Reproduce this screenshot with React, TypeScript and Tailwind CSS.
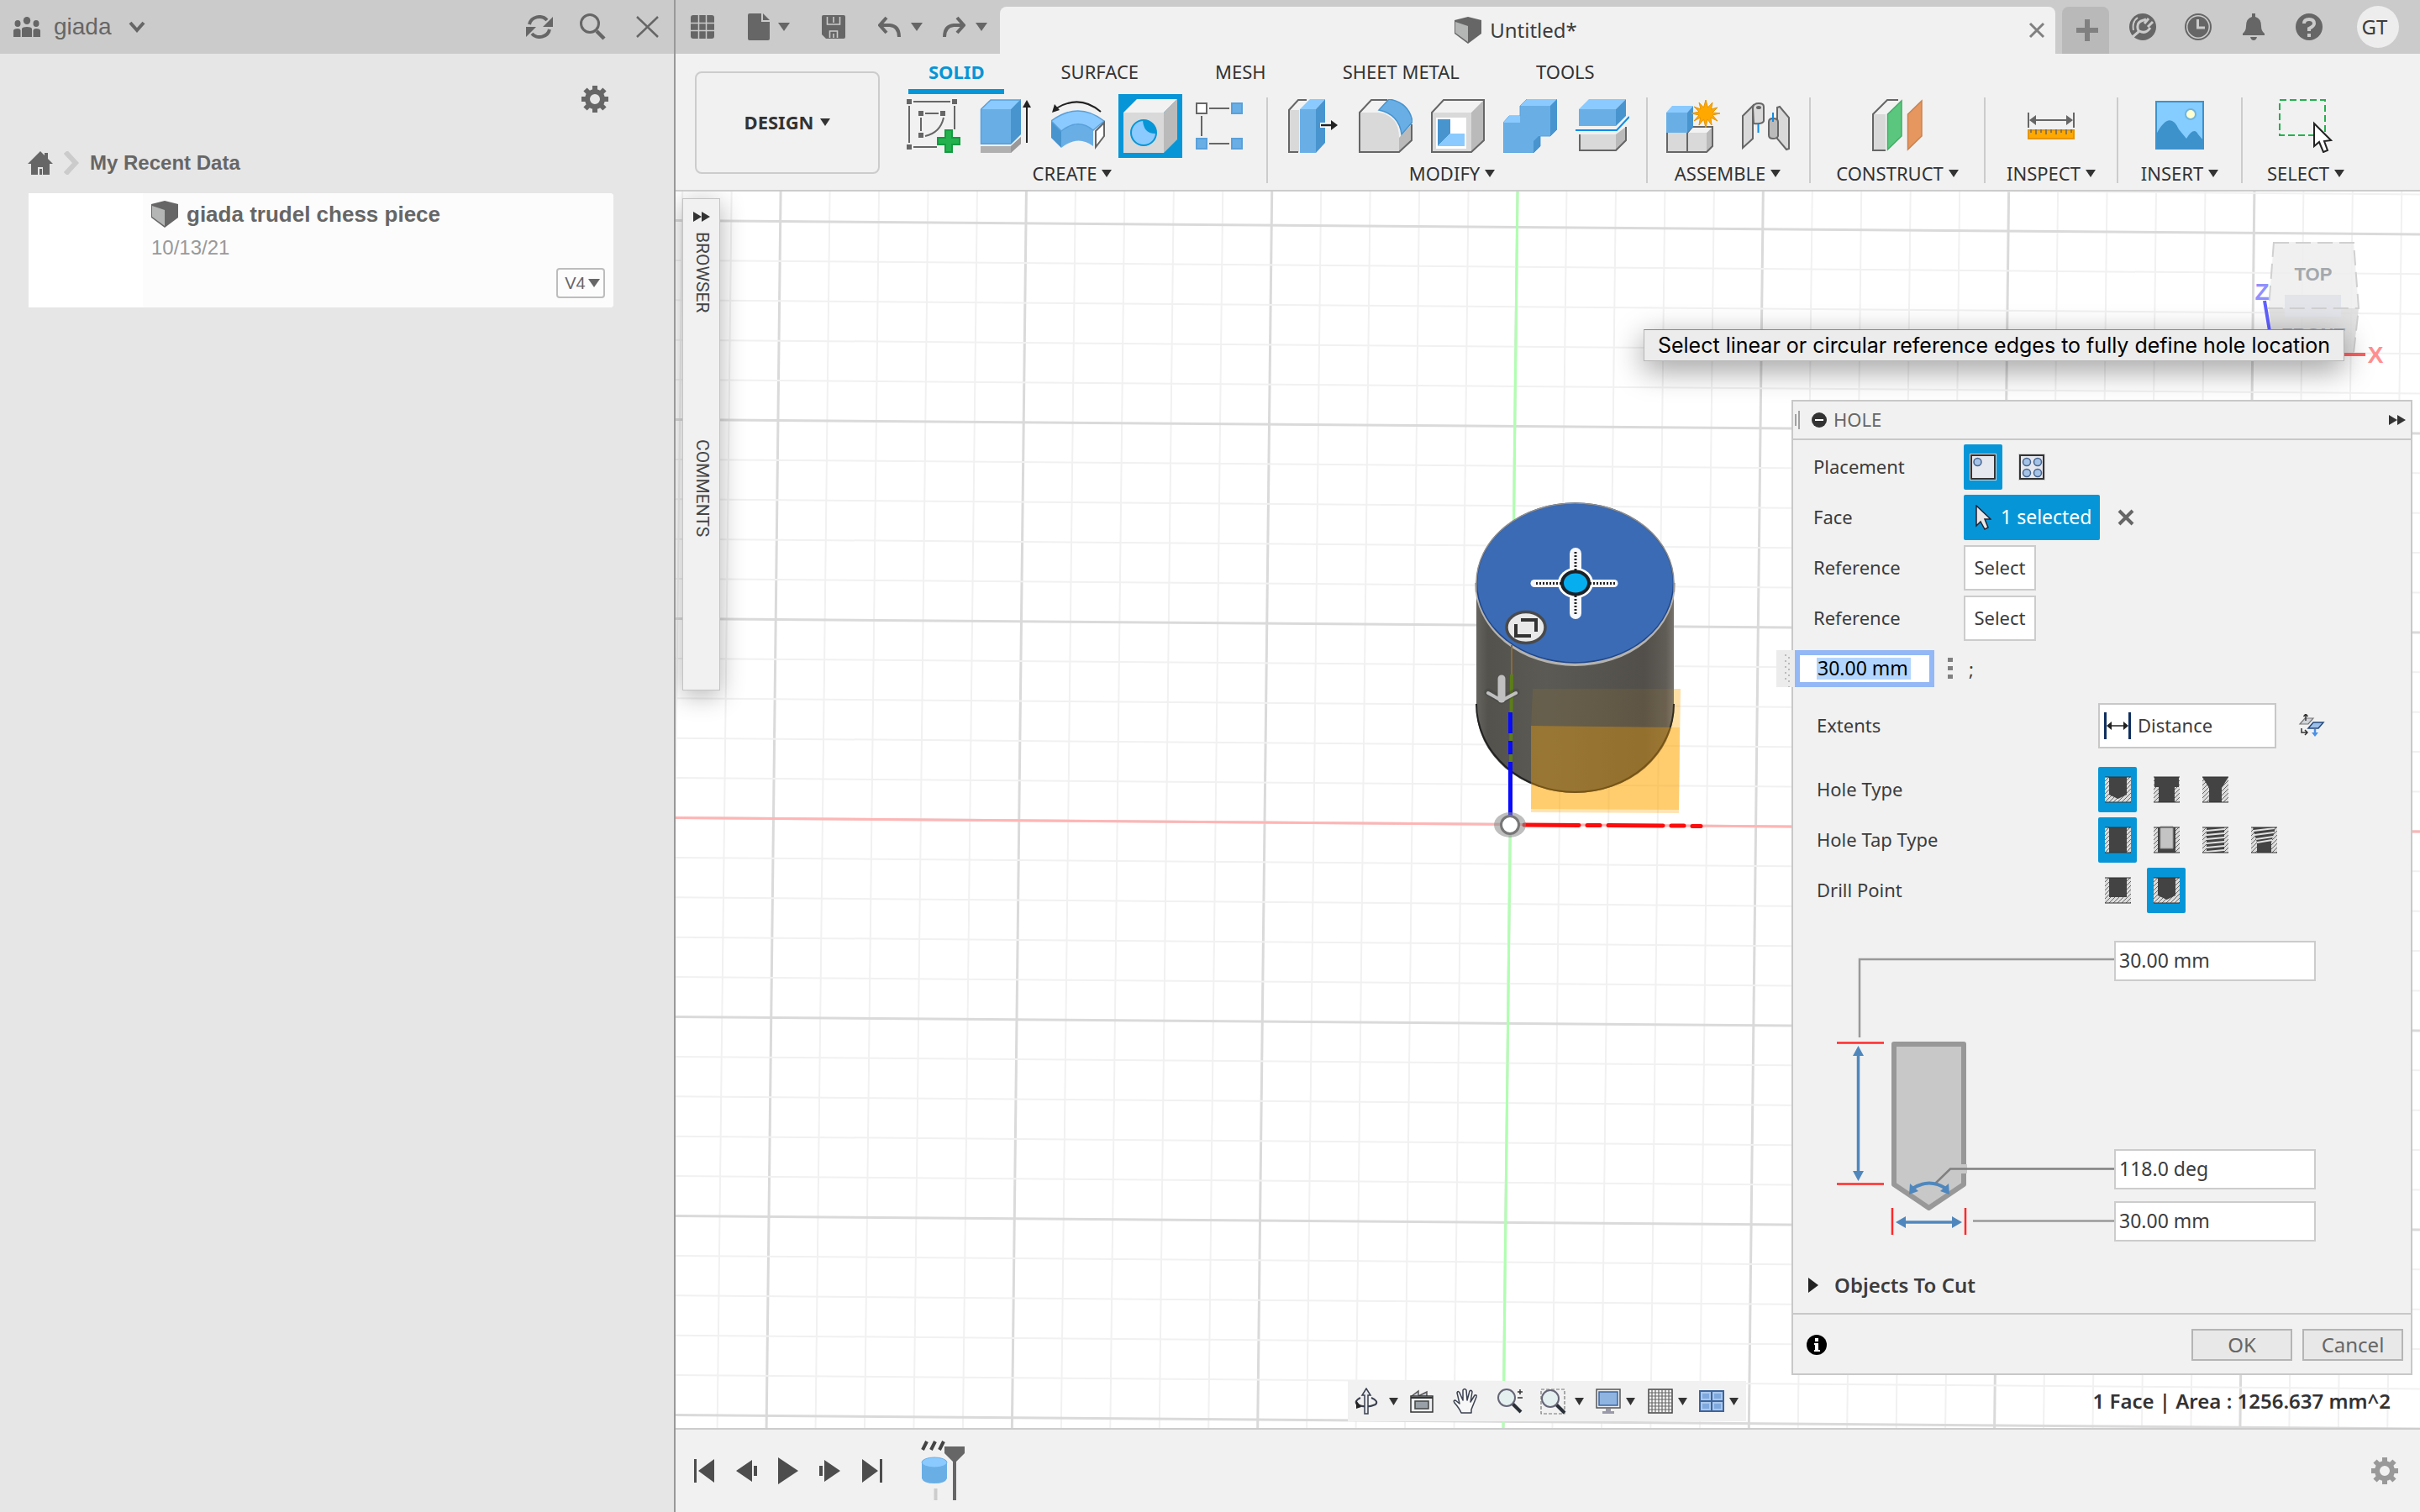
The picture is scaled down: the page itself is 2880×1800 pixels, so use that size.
import type { ReactNode } from "react";

const UI = "font-['Noto_Sans','Open_Sans',sans-serif]";
const ARIAL = "font-['Liberation_Sans',Arial,sans-serif]";

function Caret({ className = "w-4 h-3" }: { className?: string }) {
  return (
    <svg viewBox="0 0 12 10" preserveAspectRatio="none" className={className} fill="currentColor" aria-hidden="true">
      <path d="M0 0H12L6 10Z" />
    </svg>
  );
}

function Glyph({ box, className, children }: { box: string; className: string; children: ReactNode }) {
  return (
    <svg viewBox={box} className={className} fill="none" aria-hidden="true">
      {children}
    </svg>
  );
}

function Cube({ className }: { className: string }) {
  return (
    <Glyph box="0 0 32 32" className={className}>
      <path d="M0 4L16 0L32 4V20L16 32L0 20Z" fill="#666" />
      <path d="M1 6L16 11V30L1 19Z" fill="#b4b6b6" />
    </Glyph>
  );
}

function Gear({ className }: { className: string }) {
  return (
    <Glyph box="0 0 32 32" className={className}>
      <circle cx="16" cy="16" r="9" stroke="currentColor" strokeWidth="6" />
      <g stroke="currentColor" strokeWidth="6">
        <path d="M16 0V6M16 26V32M0 16H6M26 16H32" />
        <path d="M4.5 4.5L9 9M23 23L27.5 27.5M4.5 27.5L9 23M23 9L27.5 4.5" />
      </g>
    </Glyph>
  );
}

/* ---------- Data panel ---------- */

function DataPanel() {
  return (
    <aside className={`flex w-[804px] shrink-0 flex-col border-r-2 border-[#999] bg-[#e6e6e6] text-[#666] ${ARIAL}`}>
      <header className="flex h-16 items-center bg-[#cbcbcb] pl-4 pr-4">
        <button className="flex items-center gap-4 text-[28px] leading-8">
          <Glyph box="0 0 32 24" className="h-6 w-8">
            <g fill="#666">
              <ellipse cx="5" cy="8" rx="3.5" ry="4" />
              <ellipse cx="16" cy="4.5" rx="4.2" ry="4.5" />
              <ellipse cx="27" cy="8" rx="3.5" ry="4" />
              <path d="M0 24V16Q1 14 5 14Q8 14 8.500 16V24ZM32 24V16Q31 14 27 14Q24 14 23.500 16V24ZM10 24V14Q11 12 16 12Q21 12 22 14V24Z" />
            </g>
          </Glyph>
          giada
          <Glyph box="0 0 20 14" className="ml-1 h-[14px] w-5">
            <path d="M2 2L10 11L18 2" stroke="#666" strokeWidth="4" />
          </Glyph>
        </button>
        <div className="ml-auto flex items-center gap-8">
          <button aria-label="Refresh">
            <Glyph box="0 0 32 28" className="h-7 w-8">
              <path d="M4 11A12 11 0 0 1 25 6M28 17A12 11 0 0 1 7 22" stroke="#666" strokeWidth="4" />
              <path d="M32 2V14H20ZM0 26V14H12Z" fill="#666" />
            </Glyph>
          </button>
          <button aria-label="Search">
            <Glyph box="0 0 32 32" className="size-8">
              <circle cx="12" cy="12" r="10.500" stroke="#666" strokeWidth="3" />
              <path d="M20 21L29 30" stroke="#666" strokeWidth="4.500" />
            </Glyph>
          </button>
          <button aria-label="Close data panel">
            <Glyph box="0 0 32 28" className="h-7 w-8">
              <path d="M4 2L29 26M29 2L4 26" stroke="#666" strokeWidth="2.500" />
            </Glyph>
          </button>
        </div>
      </header>

      <div className="flex h-[108px] items-center justify-end pr-[78px]">
        <button aria-label="Panel settings" className="text-[#666]">
          <Gear className="size-8" />
        </button>
      </div>

      <nav className="flex h-[58px] items-start gap-[13px] pl-[33px] pt-2">
        <a href="#home" aria-label="Home">
          <Glyph box="0 0 30 28" className="h-7 w-[30px]">
            <path d="M15 0L30 15H26V28H18V19H12V28H4V15H0Z" fill="#666" />
            <path d="M20 2H24V10H20Z" fill="#666" />
            <path d="M14 21H17V28H14Z" fill="#666" />
          </Glyph>
        </a>
        <Glyph box="0 0 18 28" className="h-7 w-[18px]">
          <path d="M2 1L14 14L2 27" stroke="#cbcbcb" strokeWidth="6" />
        </Glyph>
        <a href="#recent" className="text-[24px] font-bold leading-7">
          My Recent Data
        </a>
      </nav>

      <article className="ml-[34px] mr-[72px] flex h-[136px] rounded-r bg-white">
        <div className="w-[136px]" />
        <div className="flex flex-1 flex-col rounded-r bg-[#fcfcfc] pl-[10px] pr-[10px] pt-[9px]">
          <div className="flex items-center gap-[10px]">
            <Cube className="h-8 w-8" />
            <h2 className="text-[26px] font-bold leading-8">giada trudel chess piece</h2>
          </div>
          <time className="mt-2 text-[24px] leading-8 text-[#999]">10/13/21</time>
          <button className="mt-2 flex h-9 w-[58px] items-center justify-center gap-[3px] self-end rounded border-2 border-[#bdbdbd] pl-1 text-[20px] leading-6">
            V4
            <Caret className="h-[10px] w-[14px]" />
          </button>
        </div>
      </article>
    </aside>
  );
}

/* ---------- Top bar ---------- */

function TopBar() {
  return (
    <header className="flex h-16 items-end bg-[#cbcbcb] text-[#666]">
      <div className="flex h-16 w-[386px] items-center pl-[18px]">
        <button aria-label="Show data panel" className="mr-10">
          <Glyph box="0 0 28 28" className="size-7">
            <rect width="28" height="28" rx="3" fill="#666" />
            <path d="M9.500 0V28M18.500 0V28M0 9.500H28M0 18.500H28" stroke="#cbcbcb" strokeWidth="1.500" />
          </Glyph>
        </button>
        <button aria-label="File" className="mr-[38px] flex items-center gap-[10px]">
          <Glyph box="0 0 26 32" className="h-8 w-[26px]">
            <path d="M2 0H16V10H26V30Q26 32 24 32H2Q0 32 0 30V2Q0 0 2 0Z" fill="#666" />
            <path d="M18 0L26 8H18Z" fill="#666" />
          </Glyph>
          <Caret className="h-[10px] w-[14px]" />
        </button>
        <button aria-label="Save" className="mr-[39px]">
          <Glyph box="0 0 28 28" className="size-7">
            <path d="M2 0H26Q28 0 28 2V26Q28 28 26 28H5L0 23V2Q0 0 2 0Z" fill="#666" />
            <path d="M6.500 2V11H21.500V2M14 2V9M9.500 27V19H18.500V27M14 22V27" stroke="#cbcbcb" strokeWidth="1.600" />
          </Glyph>
        </button>
        <button aria-label="Undo" className="mr-6 flex items-center gap-3">
          <Glyph box="0 0 27 26" className="h-[26px] w-[27px]">
            <path d="M10 2L2 11L10 20M3 11H14Q25 12 25 25" stroke="#666" strokeWidth="4" />
          </Glyph>
          <Caret className="h-[10px] w-[14px]" />
        </button>
        <button aria-label="Redo" className="flex items-center gap-3">
          <Glyph box="0 0 27 26" className="h-[26px] w-[27px]">
            <path d="M17 2L25 11L17 20M24 11H13Q2 12 2 25" stroke="#666" strokeWidth="4" />
          </Glyph>
          <Caret className="h-[10px] w-[14px]" />
        </button>
      </div>

      <div className="flex h-14 flex-1 items-center rounded-t-lg bg-[#f1f1f1] pl-1 pr-3">
        <div className="flex flex-1 items-center justify-center gap-[10px] text-[24px] leading-8 text-[#3c3c3c]">
          <Cube className="h-8 w-8" />
          Untitled*
        </div>
        <button aria-label="Close tab" className="text-[#808080]">
          <Glyph box="0 0 20 20" className="size-5">
            <path d="M2 2L18 18M18 2L2 18" stroke="#808080" strokeWidth="3" />
          </Glyph>
        </button>
      </div>

      <button aria-label="New design" className="ml-2 flex h-14 w-14 items-center justify-center rounded-t-lg bg-[#b9b9b9] pl-1">
        <Glyph box="0 0 26 26" className="size-[26px]">
          <path d="M13 0V26M0 13H26" stroke="#808080" strokeWidth="6" />
        </Glyph>
      </button>

      <div className="flex h-16 items-center pl-6 pr-[25px]">
        <button aria-label="Job status" className="mr-[34px]">
          <Glyph box="0 0 32 32" className="size-8">
            <circle cx="16" cy="16" r="16" fill="#666" />
            <path d="M5 20Q3 10 10 5" stroke="#cbcbcb" strokeWidth="2" />
            <path d="M17 8Q9 10 10 17Q10 20 12 21L4 28M17 8L20 7M12 21Q20 25 25 17M18 12L23 6M22 16L28 10" stroke="#cbcbcb" strokeWidth="3" />
          </Glyph>
        </button>
        <button aria-label="Recent" className="mr-[36px]">
          <Glyph box="0 0 32 32" className="size-8">
            <circle cx="16" cy="16" r="15" stroke="#666" strokeWidth="2" />
            <circle cx="16" cy="16" r="12.500" fill="#666" />
            <path d="M15.500 7V17H24" stroke="#cbcbcb" strokeWidth="3" />
          </Glyph>
        </button>
        <button aria-label="Notifications" className="mr-9">
          <Glyph box="0 0 28 32" className="h-8 w-7">
            <path d="M12 0H16V4Q23 6 23 15Q23 21 27 24V26H1V24Q5 21 5 15Q5 6 12 4Z" fill="#666" />
            <path d="M10 28H18Q17 32 14 32Q11 32 10 28Z" fill="#666" />
          </Glyph>
        </button>
        <button aria-label="Help" className="mr-[41px]">
          <Glyph box="0 0 32 32" className="size-8">
            <circle cx="16" cy="16" r="16" fill="#666" />
            <path d="M10 12Q10 7 16 7Q22 7 22 12Q22 15 16 18V21" stroke="#cbcbcb" strokeWidth="4" />
            <path d="M14 24H18V28H14Z" fill="#cbcbcb" />
          </Glyph>
        </button>
        <button className="flex size-[50px] items-center justify-center rounded-full bg-[#ededed] pr-2 text-[24px] leading-7 text-[#3c3c3c]">GT</button>
      </div>
    </header>
  );
}

/* ---------- Ribbon ---------- */

const line = "#666";
const front = "#d9d9d9";
const side = "#bababa";
const bTop = "#8acaff";
const bFront = "#69afe6";
const bSide = "#4794cf";

const icons: Record<string, ReactNode> = {
  sketch: (
    <>
      <path d="M0 0H6V6H0ZM54 0H60V6H54ZM0 54H6V60H0ZM14 14H20V20H14ZM40 14H46V20H40ZM14 40H20V46H14Z" fill={line} />
      <path d="M8 3H52M3 8V52M57 8V36M8 57H36M22 17H38M17 22V38M44 22Q40 40 22 44" stroke={line} strokeWidth="2" />
      <path d="M46 37H54V46H63V54H54V63H46V54H37V46H46Z" fill="#23b14d" stroke="#149b41" strokeWidth="2" />
    </>
  ),
  extrude: (
    <>
      <path d="M2 56H38L50 45V53L38 64H2Z" fill="#b0b0b0" />
      <path d="M38 56L50 45V53L38 64Z" fill="#999" />
      <path d="M2 12H38V54H2Z" fill={bFront} />
      <path d="M2 12L14 1H50L38 12Z" fill={bTop} />
      <path d="M38 12L50 0V42L38 54Z" fill={bSide} />
      <path d="M2.500 12L14 1H50M2.500 12V53H38" stroke="#5aa0da" strokeWidth="1.500" />
      <path d="M57 52V8" stroke="#222" strokeWidth="2" />
      <path d="M52 10L57 1L62 10Z" fill="#222" />
    </>
  ),
  revolve: (
    <>
      <path d="M0 26L12 38V58L0 46Z" fill={bSide} />
      <path d="M12 38Q32 22 50 37V56Q32 42 12 58Z" fill={bFront} />
      <path d="M0 26Q32 2 63 26L50 37Q32 22 12 38Z" fill={bTop} stroke="#5aa0da" strokeWidth="1.500" />
      <path d="M63 28L53 38V57L63 44Z" fill="#fff" stroke={line} strokeWidth="2" />
      <path d="M59 15Q34 -6 6 11" stroke="#222" strokeWidth="2" />
      <path d="M1 16L4 6L10 13Z" fill="#222" />
    </>
  ),
  hole: (
    <>
      <path d="M0 16H48V64H0Z" fill={front} />
      <path d="M0 16L16 0H64L48 16Z" fill="#f2f2f2" />
      <path d="M48 16L64 0V48L48 64Z" fill={side} />
      <circle cx="24" cy="40" r="15" fill={bTop} stroke="#0696d7" strokeWidth="2" />
      <path d="M23 25A15 15 0 0 1 39 41Q24 42 23 25Z" fill="#0696d7" />
    </>
  ),
  pattern: (
    <>
      <path d="M1 5H13V17H1Z" fill="#fff" stroke={line} strokeWidth="2" />
      <path d="M43 5H55V17H43ZM1 47H13V59H1ZM43 47H55V59H43Z" fill={bFront} stroke="#5aa0da" strokeWidth="2" />
      <path d="M16 11H40M7 20V44M16 53H40" stroke={line} strokeWidth="2" />
    </>
  ),
  press: (
    <>
      <path d="M3 13H15V63H3Z" fill={front} />
      <path d="M3 13L14 1H26L15 13Z" fill="#f2f2f2" />
      <path d="M14 63H3V13L14 1H24" stroke={line} strokeWidth="2" />
      <path d="M16 12H35V64H16Z" fill={bFront} />
      <path d="M16 12L28 0H46L35 12Z" fill={bTop} />
      <path d="M35 12L46 0V52L35 64Z" fill={bSide} />
      <path d="M40 31H54" stroke="#fff" strokeWidth="6" />
      <path d="M41 31H54" stroke="#222" strokeWidth="2.500" />
      <path d="M53 25L61 31L53 37Z" fill="#222" />
    </>
  ),
  fillet: (
    <>
      <path d="M48 46L63 30V49L48 63Z" fill={side} />
      <path d="M1 16H24Q48 20 48 46V63H1Z" fill={front} />
      <path d="M1 16L15 1H34L23 16Z" fill="#f2f2f2" />
      <path d="M34 1H15L1 16V63H48L63 49V30" stroke={line} strokeWidth="2" />
      <path d="M24 13L36 0Q60 4 64 27L51 42Q48 18 24 13Z" fill={bFront} stroke={bSide} strokeWidth="1.500" />
    </>
  ),
  shell: (
    <>
      <path d="M1 16H48V63H1Z" fill={front} />
      <path d="M1 16L15 1H63L48 16Z" fill="#f2f2f2" />
      <path d="M48 16L63 1V49L48 63Z" fill={side} />
      <path d="M1 16L15 1H63V49L48 63H1Z" stroke={line} strokeWidth="2" />
      <path d="M6 22H42V59H6Z" fill="#fff" />
      <path d="M8 24H23V41L8 56Z" fill={bSide} />
      <path d="M8 56L23 41H40V56Z" fill={bTop} />
    </>
  ),
  combine: (
    <>
      <path d="M0 28L7 20H20V8L28 0H64V36L56 44H44V56L36 64H0Z" fill={bFront} stroke="#5aa0da" strokeWidth="1" />
      <path d="M20 8L28 0H64L56 8Z" fill={bTop} />
      <path d="M0 28L7 20H20V28Z" fill={bTop} />
      <path d="M56 8L64 0V36L56 44ZM36 50L42 44H44V56L36 64Z" fill={bSide} />
    </>
  ),
  split: (
    <>
      <path d="M4 12H48V32H4Z" fill={bFront} />
      <path d="M4 12L16 0H60L48 12Z" fill={bTop} />
      <path d="M48 12L60 0V20L48 32Z" fill={bSide} />
      <path d="M5 42H48V62H5Z" fill={front} />
      <path d="M48 42L60 33V50L48 62Z" fill={side} />
      <path d="M5 42V61H48L60 49V33" stroke={line} strokeWidth="2" />
      <path d="M0 37H49L64 21" stroke="#0c8ce9" strokeWidth="2" />
    </>
  ),
  component: (
    <>
      <path d="M1 40H25V63H1ZM25 40H48V63H25Z" fill={front} />
      <path d="M48 40L55 33V56L48 63Z" fill={side} />
      <path d="M25 40L31 33H55L48 40Z" fill="#f2f2f2" />
      <path d="M1 40V63H25V40M25 63H48L55 56V33H31L25 40" stroke={line} strokeWidth="2" />
      <path d="M0 16H25V40H0Z" fill={bFront} />
      <path d="M0 16L7 8H32L25 16Z" fill={bTop} />
      <path d="M25 16L32 8V33L25 40Z" fill={bSide} />
      <path d="M47 1L49.500 10L55 4L53.500 12L61 10L55 16L64 17L55 19L61 26L53 22L54 31L49 24L47 34L44.500 24L39 31L40.500 22L33 26L39 19L30 17L39 15L33 9L41 12L39 4L44.500 10Z" fill="#ffa800" stroke="#e59500" strokeWidth="1" />
    </>
  ),
  joint: (
    <>
      <path d="M5 20L17 8V47L5 58Z" fill={front} stroke={line} strokeWidth="2" />
      <path d="M17 10Q18 5 24 5Q30 5 30 9V26Q29 30 18 29Z" fill={front} stroke={line} strokeWidth="2" />
      <ellipse cx="24" cy="10" rx="3" ry="2" fill={line} />
      <path d="M46 10L49 9L60 22V59L57 60L46 47Z" fill={front} stroke={line} strokeWidth="2" />
      <path d="M36 27Q36 23 41 23Q47 23 47 27V44Q46 47 41 47Q36 47 36 43Z" fill={side} stroke={line} strokeWidth="2" />
      <path d="M23.500 30V40M41 16V27" stroke="#0c8ce9" strokeWidth="2" />
    </>
  ),
  construct: (
    <>
      <path d="M3 18H18V61H3Z" fill={front} />
      <path d="M3 18L20 1H36L19 18Z" fill="#f2f2f2" />
      <path d="M18 61H3V18L20 1H33" stroke={line} strokeWidth="2" />
      <path d="M20.500 18L37 2V44L20.500 60Z" fill="#5bc77e" stroke="#43ad66" strokeWidth="1.500" />
      <path d="M44.500 18L61 2V44L44.500 60Z" fill="#e6965f" stroke="#c9824f" strokeWidth="1.500" />
    </>
  ),
  inspect: (
    <>
      <path d="M5 16V34M59 16V34M10 25H54" stroke={line} strokeWidth="2" />
      <path d="M6 25L14 19V31ZM58 25L50 19V31Z" fill={line} />
      <path d="M5 37H59V47H5Z" fill="#ffa800" stroke="#e59500" strokeWidth="2" />
      <path d="M8 36V40M14 36V42M20 36V40M26 36V42M32 36V40M38 36V42M44 36V40M50 36V42M56 36V40" stroke={line} strokeWidth="1.500" />
    </>
  ),
  insert: (
    <>
      <path d="M4 3H60V59H4Z" fill="#85ccff" stroke="#3d92cc" strokeWidth="2" />
      <circle cx="45" cy="18" r="6" fill="#ffffd0" stroke="#6fb4e0" strokeWidth="2" />
      <path d="M4 42Q20 12 31 36L40 47Q49 32 54 42L60 49V59H4Z" fill="#3d92cc" />
    </>
  ),
  select: (
    <>
      <path d="M1 1H55V43H1Z" stroke="#23b14d" strokeWidth="2" strokeDasharray="8 4" />
      <path d="M42 29V56L48 51L53 63L58 61L54 50L62 49Z" fill="#fff" stroke="#222" strokeWidth="2" />
    </>
  ),
};

type Group = { label: string; tools: string[]; width: string };

const groups: Group[] = [
  { label: "CREATE", tools: ["sketch", "extrude", "revolve", "hole", "pattern"], width: "pl-[18px] pr-[14px]" },
  { label: "MODIFY", tools: ["press", "fillet", "shell", "combine", "split"], width: "pl-[18px] pr-[14px]" },
  { label: "ASSEMBLE", tools: ["component", "joint"], width: "pl-[18px] pr-[14px]" },
  { label: "CONSTRUCT", tools: ["construct"], width: "w-[208px] pl-[2px]" },
  { label: "INSPECT", tools: ["inspect"], width: "w-[158px] pl-[2px]" },
  { label: "INSERT", tools: ["insert"], width: "w-[148px] pl-[2px]" },
  { label: "SELECT", tools: ["select"], width: "w-[152px] pl-[2px]" },
];

function Ribbon() {
  return (
    <section className="flex h-[164px] border-b-2 border-[#ccc] bg-[#f1f1f1] text-[22px] leading-7 text-[#333]">
      <button className="ml-[23px] mt-[21px] flex h-[122px] w-[220px] items-center justify-center gap-2 rounded-lg border-2 border-[#ccc] pb-[2px] font-bold">
        DESIGN
        <Caret className="h-[9px] w-3" />
      </button>
      <div className="flex flex-col">
        <nav className="flex h-12 items-stretch gap-[43px] pl-[34px]">
          {["SOLID", "SURFACE", "MESH", "SHEET METAL", "TOOLS"].map((t, i) => (
            <button
              key={t}
              className={
                i === 0
                  ? "border-b-[6px] border-[#0696d7] px-6 font-bold text-[#0696d7]"
                  : "border-b-[6px] border-transparent px-6"
              }
            >
              {t}
            </button>
          ))}
        </nav>
        <div className="flex pl-2">
          {groups.map((g, i) => (
            <div
              key={g.label}
              className={`flex h-[108px] flex-col items-center ${g.width} ${i ? "relative before:absolute before:left-0 before:top-1 before:h-[102px] before:w-0.5 before:bg-[#ccc]" : ""}`}
            >
              <div className="flex gap-[10px]">
                {g.tools.map((t) => (
                  <button
                    key={t}
                    aria-label={t}
                    className={`flex size-[76px] items-center justify-center ${t === "hole" ? "bg-[#0696d7]" : ""}`}
                  >
                    <Glyph box="0 0 64 64" className="size-16">
                      {icons[t]}
                    </Glyph>
                  </button>
                ))}
              </div>
              <button className={`mt-1 flex items-center gap-[6px] ${g.tools.length > 2 ? "mr-[14px]" : g.tools.length > 1 ? "mr-1" : ""}`}>
                {g.label}
                <Caret className="h-[9px] w-3" />
              </button>
            </div>
          ))}
        </div>
      </div>
    </section>
  );
}

/* ---------- 3D canvas ---------- */

const range = (a: number, b: number) => Array.from({ length: b - a + 1 }, (_, i) => a + i);

function Scene() {
  return (
    <svg viewBox="804 228 2076 1472" preserveAspectRatio="xMinYMin slice" className="absolute inset-0 size-full" fill="none" aria-hidden="true">
      <defs>
        <pattern id="hatch" width="5" height="5" patternUnits="userSpaceOnUse">
          <path d="M0 0H5V5H0Z" fill="#dcdcdc" />
          <path d="M-1 6L6 -1" stroke="#666" strokeWidth="1" />
        </pattern>
        <linearGradient id="wall">
          <stop offset="0" stopColor="#65645e" />
          <stop offset="0.060" stopColor="#53524c" />
          <stop offset="0.350" stopColor="#5b5a54" />
          <stop offset="0.850" stopColor="#524f4a" />
          <stop offset="0.960" stopColor="#605c56" />
          <stop offset="1" stopColor="#77736c" />
        </linearGradient>
      </defs>
      {range(-18, 19).map((k) => {
        const x = 1806 + k * 58.46;
        return <path key={k} d={`M${x} 228L${x - 17} 1700`} stroke={k % 5 ? "#f1f1f1" : "#dadada"} strokeWidth={k % 5 ? 2 : 3} />;
      })}
      {range(-16, 15).map((k) => {
        const y = 973.5 + k * 47.4;
        return <path key={k} d={`M804 ${y}L2880 ${y + 16.4}`} stroke={k % 5 ? "#f1f1f1" : "#dadada"} strokeWidth={k % 5 ? 2 : 3} />;
      })}
      <path d="M1806 228L1789 1700" stroke="#b0ffb0" strokeWidth="3" />
      <path d="M804 973.500L2880 990" stroke="#ffb5b5" strokeWidth="3" />

      <path d="M1824 820H2000L1998 968L1822 967Z" fill="#ffa500" opacity="0.300" />
      <path d="M1757 700V843A117.500 101 0 0 0 1992 843V700Z" fill="url(#wall)" />
      <path d="M1757 838A117.500 105 0 0 0 1992 838" stroke="#222" strokeWidth="2" />
      <path d="M1757 694A117.500 97 0 0 0 1992 694" stroke="#b5b3af" strokeWidth="4" />
      <ellipse cx="1874.500" cy="694" rx="117" ry="95" fill="#3b6bb4" stroke="#1f468c" strokeWidth="1.500" />
      <path d="M1757 705V694A117.500 95 0 0 1 1992 694V705" stroke="#8f8f8f" strokeWidth="1.500" />
      <path d="M1824 820H2000L1999 866L1822 864Z" fill="#ffa500" opacity="0.080" />
      <path d="M1822 864L1999 866L1998 964L1822 963Z" fill="#ffa500" opacity="0.380" />

      <path d="M1799 768V805" stroke="#8a6a3a" strokeWidth="2" />
      <path d="M1799 803L1798 907" stroke="#5c7d1a" strokeWidth="4" />
      <path d="M1797.500 848V873M1797.500 882V898M1797.500 907V973" stroke="#0a0aff" strokeWidth="5" />
      <path d="M1814 982L1879 982.500M1889 982.500H1904M1914 982.500L1979 983M1989 983H2004M2014 983.500H2024" stroke="#fb0d0d" strokeWidth="5" strokeLinecap="round" />
      <ellipse cx="1797" cy="982" rx="19" ry="15" fill="#888" opacity="0.550" />
      <circle cx="1797" cy="982" r="10.500" fill="#fff" stroke="#777" strokeWidth="3" />

      <path d="M1787 808V834M1771 824L1787 833L1804 824" stroke="#444" strokeWidth="9" strokeLinecap="round" opacity="0.400" />
      <path d="M1787 808V832" stroke="#c0c0c0" strokeWidth="9" strokeLinecap="round" />
      <path d="M1771 825L1787 834L1804 825" stroke="#c0c0c0" strokeWidth="4" strokeLinecap="round" />

      <path d="M1875 659V730" stroke="#fff" strokeWidth="14" strokeLinecap="round" opacity="0.950" />
      <path d="M1826 694.500H1921" stroke="#fff" strokeWidth="9" strokeLinecap="round" opacity="0.950" />
      <ellipse cx="1875" cy="694" rx="21" ry="18" fill="#fff" />
      <path d="M1875 657V732M1828 694.500H1923" stroke="#222" strokeWidth="3" strokeDasharray="2 2" />
      <ellipse cx="1875" cy="694" rx="16" ry="13.500" fill="#06aef0" stroke="#1a2228" strokeWidth="4" />

      <ellipse cx="1816" cy="747" rx="23" ry="18.500" fill="#e9e9ea" stroke="#4a4a4c" strokeWidth="3.500" />
      <path d="M1810 738H1828V752M1804 743V757H1822" stroke="#333" strokeWidth="4" />

      <path d="M2706 288H2801L2807 367H2700Z" fill="#ededed" opacity="0.850" />
      <path d="M2700 367H2807L2801 420H2706Z" fill="#dcdcdc" opacity="0.850" />
      <path d="M2719 351H2786V377H2719Z" fill="#e2e4ea" />
      <path d="M2706 289H2801L2807 367L2801 420M2706 288L2700 367H2807" stroke="#d0d0d0" strokeWidth="2" strokeDasharray="18 8" />
      <path d="M2695 358L2701 394" stroke="#6060ff" strokeWidth="4" />
      <path d="M2788 422H2815" stroke="#ff6060" strokeWidth="4" />
      <g className="font-['Liberation_Sans',sans-serif] font-bold" textAnchor="middle" fill="#a3a8ad">
        <text x="2753" y="334" fontSize="22">TOP</text>
        <text x="2753" y="406" fontSize="22">FRONT</text>
      </g>
      <g className="font-['Liberation_Sans',sans-serif] font-bold" textAnchor="middle" fontSize="28">
        <text x="2692" y="357" fill="#9090ff">Z</text>
        <text x="2827" y="432" fill="#ff9090">X</text>
      </g>
    </svg>
  );
}

function SideTabs() {
  return (
    <div className="absolute left-2 top-2 flex h-[586px] w-[45px] flex-col items-center border border-[#c4c4c4] bg-[#f1f1f1] font-['Roboto',sans-serif] text-[21px] leading-6 text-[#444] shadow-[0_6px_30px_rgba(0,0,0,0.3)]">
      <button aria-label="Expand" className="mt-[15px]">
        <Glyph box="0 0 20 12" className="h-3 w-5">
          <path d="M0 0L10 6V0L20 6L10 12V6L0 12Z" fill="#333" />
        </Glyph>
      </button>
      <button className="mt-[12px] h-[247px] pl-0.5 text-left [writing-mode:vertical-rl]">BROWSER</button>
      <button className="pl-0.5 text-left [writing-mode:vertical-rl]">COMMENTS</button>
    </div>
  );
}

/* ---------- Hole dialog ---------- */

const holeIcons: Record<string, ReactNode> = {
  simple: <path d="M5 0H26V21L15.500 26L5 21Z" fill="#434343" />,
  counterbore: <path d="M1 0H30V12H25V30H6V12H1Z" fill="#434343" />,
  countersink: <path d="M0 0H31L23 13V30H8V13Z" fill="#434343" />,
  through: <path d="M5 0H26V30H5Z" fill="#434343" />,
  clearance: (
    <>
      <path d="M5 0H26V30H5Z" fill="#434343" />
      <path d="M8 -1H23V25H8Z" fill="#c4c4c4" stroke="#999" />
    </>
  ),
  tapped: (
    <>
      <path d="M5 0H26V30H5Z" fill="#434343" />
      <path d="M5 4L26 2M5 9L26 7M5 14L26 12M5 19L26 17M5 24L26 22M5 29L26 27" stroke="#e2e2e2" strokeWidth="2" />
    </>
  ),
  taper: (
    <>
      <path d="M2 0H29L24 18V30H7V18Z" fill="#434343" />
      <path d="M3 4L28 1M4 9L27 6M6 14L26 11M7 18L25 15" stroke="#e2e2e2" strokeWidth="2" />
    </>
  ),
  flat: <path d="M5 0H26V23H5Z" fill="#434343" />,
};

function HoleIcon({ name }: { name: string }) {
  return (
    <Glyph box="0 0 31 30" className="h-[30px] w-[31px] overflow-visible">
      <path d="M0 0H31V30H0Z" fill="url(#hatch)" />
      {holeIcons[name]}
      <path d="M0 0H31M0 30H31" stroke="#333" strokeWidth="1" />
    </Glyph>
  );
}

function OptionRow({ label, options, active, className }: { label: string; options: string[]; active: number; className: string }) {
  return (
    <div role="group" aria-label={label} className={`flex h-[54px] items-center ${className}`}>
      <span className="w-[339px] pb-[2px] pl-1">{label}</span>
      <div className="flex gap-3">
        {options.map((o, i) => (
          <button
            key={o}
            aria-label={o}
            aria-pressed={i === active}
            className={`flex h-[54px] w-[46px] items-center justify-center ${i === active ? "rounded-xs bg-[#0696d7]" : ""}`}
          >
            <HoleIcon name={o} />
          </button>
        ))}
      </div>
    </div>
  );
}

const field = "w-[240px] h-12 border-2 border-[#ccc] bg-white px-1 pb-[2px] text-[23px] leading-7 outline-none";

function HoleDialog() {
  return (
    <section className="absolute right-[9px] top-[248px] w-[739px] text-[22px] leading-7 text-[#3c3c3c]">
      <header className="flex h-12 items-center border-2 border-[#c8c8c8] bg-[#f1f1f1] pl-px pr-[6px] text-[#666]">
        <Glyph box="0 0 8 22" className="h-[22px] w-2">
          <path d="M2 4V18M6 0V22" stroke="#888" strokeWidth="1.500" />
        </Glyph>
        <button aria-label="Collapse" className="ml-[13px] mr-2">
          <Glyph box="0 0 18 18" className="size-[18px]">
            <circle cx="9" cy="9" r="9" fill="#333" />
            <path d="M4 9H14" stroke="#fff" strokeWidth="2" />
          </Glyph>
        </button>
        <span className="pb-[2px]">HOLE</span>
        <button aria-label="Dock" className="ml-auto">
          <Glyph box="0 0 20 12" className="h-3 w-5">
            <path d="M0 0L10 6V0L20 6L10 12V6L0 12Z" fill="#333" />
          </Glyph>
        </button>
      </header>

      <div className="h-[1041px] border-x-2 border-b-2 border-[#c8c8c8] bg-[#f1f1f1] pl-6 pt-[5px]">
        <div role="group" aria-label="Placement" className="flex h-[54px] items-center">
          <span className="w-[179px] pb-[2px]">Placement</span>
          <div className="flex gap-3">
            <button aria-label="At point" className="flex h-[54px] w-[46px] items-center justify-center rounded-xs bg-[#0696d7]">
              <Glyph box="0 0 32 32" className="size-8">
                <path d="M0 0H32V32H0Z" fill="#d4d4d4" />
                <path d="M2 2H30V30H2Z" fill="#e6e8ef" stroke="#333" strokeWidth="2" />
                <circle cx="9.500" cy="10" r="4.500" fill="#a5c3e6" stroke="#46648f" strokeWidth="1.500" />
              </Glyph>
            </button>
            <button aria-label="From sketch" className="flex h-[54px] w-[46px] items-center justify-center">
              <Glyph box="0 0 32 32" className="size-8">
                <path d="M0 0H32V32H0Z" fill="#d4d4d4" />
                <path d="M2 2H30V30H2Z" fill="#e6e8ef" stroke="#333" strokeWidth="2" />
                <g fill="#a5c3e6" stroke="#46648f" strokeWidth="1.500">
                  <circle cx="10" cy="10" r="4.500" />
                  <circle cx="23" cy="10" r="4.500" />
                  <circle cx="10" cy="23" r="4.500" />
                  <circle cx="23" cy="23" r="4.500" />
                </g>
              </Glyph>
            </button>
          </div>
        </div>

        <div className="mt-[6px] flex h-[54px] items-center">
          <label htmlFor="face" className="w-[179px] pb-[2px]">Face</label>
          <button id="face" className="flex h-[54px] w-[162px] items-center gap-[11px] rounded-xs bg-[#0696d7] pl-[14px] text-[23px] text-white">
            <Glyph box="0 0 19 30" className="h-[30px] w-[19px]">
              <path d="M1 1V25L6 20L11 29L15 27L11 17H18Z" fill="#e8e8e8" stroke="#223" strokeWidth="1.500" />
            </Glyph>
            <span className="pb-[2px]">1 selected</span>
          </button>
          <button aria-label="Clear selection" className="ml-[21px]">
            <Glyph box="0 0 20 20" className="size-5">
              <path d="M2 2L18 18M18 2L2 18" stroke="#666" strokeWidth="4" />
            </Glyph>
          </button>
        </div>

        {["ref-a", "ref-b"].map((id) => (
          <div key={id} className="mt-[6px] flex h-[54px] items-center">
            <label htmlFor={id} className="w-[179px] pb-[2px]">Reference</label>
            <button id={id} className="h-[54px] w-[86px] border-2 border-[#ccc] bg-white pb-[2px]">Select</button>
          </div>
        ))}

        <div className="relative h-[74px]">
          <div className="absolute -left-[44px] top-[11px] flex h-11 items-center">
            <Glyph box="0 0 22 44" className="h-11 w-[22px]">
              <path d="M0 0H22V44H0Z" fill="#ececec" />
              <path d="M11 5V40M15 8V44" stroke="#bbb" strokeWidth="2" strokeDasharray="2 5" />
            </Glyph>
            <input
              aria-label="Depth"
              defaultValue="30.00 mm"
              className="h-11 w-[166px] border-[6px] border-[#93b8f5] bg-white bg-[linear-gradient(#b2d5ff,#b2d5ff)] bg-[length:112px_26px] bg-[position:20px_center] bg-no-repeat pb-[2px] pl-[21px] text-[23px] text-black outline-none"
            />
            <Glyph box="0 0 6 26" className="ml-4 h-[26px] w-[6px]">
              <path d="M0 0H6V5H0ZM0 10H6V15H0ZM0 20H6V25H0Z" fill="#808080" />
            </Glyph>
            <span className="ml-[19px]">;</span>
          </div>
        </div>

        <div className="flex h-[54px] items-center">
          <label htmlFor="extents" className="w-[339px] pb-[2px] pl-1">Extents</label>
          <div className="flex h-[54px] w-[212px] items-center border-2 border-[#c8c8c8] bg-white pl-[5px]">
            <Glyph box="0 0 32 32" className="size-8 shrink-0">
              <path d="M1.500 0V32M30.500 0V32" stroke="#0f2f5f" strokeWidth="3" />
              <path d="M6 16H26" stroke="#222" strokeWidth="1.500" />
              <path d="M3 16L9 11V21ZM29 16L23 11V21Z" fill="#222" />
            </Glyph>
            <select id="extents" className="h-full flex-1 appearance-none bg-transparent pb-[2px] pl-2 outline-none">
              <option>Distance</option>
            </select>
          </div>
          <button aria-label="Flip direction" className="ml-[26px]">
            <Glyph box="0 0 32 28" className="h-7 w-8">
              <path d="M2 12L8 5H18L12 12Z" fill="#d0d4da" stroke="#777" strokeWidth="1.200" />
              <path d="M12 17L18 10H30L24 17Z" fill="#9dc0e8" stroke="#234a80" strokeWidth="1.500" />
              <path d="M9 8V1M6.500 3L9 0L11.500 3M4 17V22H10M8 19L11 22L8 25" stroke="#333" strokeWidth="1.500" />
              <path d="M20 18V23" stroke="#4a90e8" strokeWidth="2.500" />
              <path d="M16 22H24L20 27Z" fill="#4a90e8" />
            </Glyph>
          </button>
        </div>

        <OptionRow className="mt-[22px]" label="Hole Type" options={["simple", "counterbore", "countersink"]} active={0} />
        <OptionRow className="mt-[6px]" label="Hole Tap Type" options={["through", "clearance", "tapped", "taper"]} active={0} />
        <OptionRow className="mt-[6px]" label="Drill Point" options={["flat", "simple"]} active={1} />

        <div className="mt-[33px] flex pl-[22px]">
          <Glyph box="2180 1120 336 358" className="h-[358px] w-[336px]">
            <path d="M2213 1235V1142H2518M2348 1453.500H2518" stroke="#999" strokeWidth="2.500" />
            <path d="M2254 1243H2337V1410L2295.500 1438L2254 1410Z" fill="#c8c8c8" stroke="#989898" strokeWidth="6" strokeLinejoin="round" />
            <path d="M2333 1391.500H2341" stroke="#c8c8c8" strokeWidth="11" />
            <path d="M2303 1409L2321 1391.500H2518" stroke="#808080" strokeWidth="2.500" />
            <path d="M2276 1415Q2296 1402 2316 1415" stroke="#4f87bd" strokeWidth="4" />
            <path d="M2272 1422L2273 1409L2283 1418ZM2320 1422L2319 1409L2309 1418Z" fill="#4f87bd" />
            <path d="M2186 1241.500H2242M2186 1409.500H2242M2252 1438V1470M2339 1438V1470" stroke="#ff2a2a" strokeWidth="2.500" />
            <path d="M2211.500 1254V1398M2265 1455H2326" stroke="#4f87bd" strokeWidth="3.500" />
            <path d="M2211.500 1245L2205 1257H2218ZM2211.500 1406L2205 1394H2218ZM2256 1455L2268 1448V1462ZM2335 1455L2323 1448V1462Z" fill="#4f87bd" />
          </Glyph>
          <div className="flex flex-col">
            <input aria-label="Hole depth" defaultValue="30.00 mm" className={field} />
            <input aria-label="Tip angle" defaultValue="118.0 deg" className={`${field} mt-[200px]`} />
            <input aria-label="Diameter" defaultValue="30.00 mm" className={`${field} mt-[14px]`} />
          </div>
        </div>

        <button className="-ml-[6px] mt-[38px] flex items-center gap-[19px] text-[24px] font-semibold">
          <Glyph box="0 0 12 18" className="h-[18px] w-3">
            <path d="M0 0L12 9L0 18Z" fill="#222" />
          </Glyph>
          Objects To Cut
        </button>
      </div>

      <footer className="flex h-[72px] items-center gap-3 border-x-2 border-b-2 border-[#c8c8c8] bg-[#f1f1f1] pl-4 pr-[9px] pt-[2px] text-[24px] text-[#666]">
        <button aria-label="Information" className="mr-auto">
          <Glyph box="0 0 24 24" className="size-6">
            <circle cx="12" cy="12" r="12" fill="#000" />
            <path d="M10 4H14V8H10ZM9 10H14V18H16V20H9V18H10V12H9Z" fill="#fff" />
          </Glyph>
        </button>
        <button className="flex h-[38px] w-[120px] items-center justify-center border-2 border-[#b5b5b5] bg-[#e8e8e8]">OK</button>
        <button className="flex h-[38px] w-[120px] items-center justify-center border-2 border-[#b5b5b5] bg-[#e8e8e8]">Cancel</button>
      </footer>
    </section>
  );
}

/* ---------- Navigation bar ---------- */

function NavBar() {
  const caret = <Caret className="h-[9px] w-[11px]" />;
  return (
    <div className="absolute bottom-2 left-[800px] flex h-12 w-[474px] items-center bg-[#f1f1f1] pl-[7px] text-[#333]">
      <button aria-label="Orbit" className="mr-[14px] flex items-center gap-3">
        <Glyph box="0 0 30 32" className="h-8 w-[30px]">
          <path d="M8 12Q0 16 4 20Q15 25 26 20Q30 16 21 12" stroke="#3a4050" strokeWidth="2" />
          <path d="M13 31V9H10L15 1L20 9H17V31Z" fill="#e8eaee" stroke="#3a4050" strokeWidth="1.500" />
          <path d="M3 15L9 23L3 25Z" fill="#222" />
        </Glyph>
        {caret}
      </button>
      <button aria-label="Look at" className="mr-[23px]">
        <Glyph box="0 0 28 30" className="h-[30px] w-7">
          <path d="M2 9L10 3V8M10 9L20 4V9" fill="#c8ccd4" stroke="#555" strokeWidth="1.500" />
          <path d="M1 9H27V28H1Z" fill="#eef0f3" stroke="#333" strokeWidth="1.500" />
          <path d="M1 11H27" stroke="#333" strokeWidth="2" />
          <path d="M6 15H22V24H6Z" fill="#9aa0a8" stroke="#444" strokeWidth="1.500" />
        </Glyph>
      </button>
      <button aria-label="Pan" className="mr-[22px]">
        <Glyph box="0 0 30 32" className="h-8 w-[30px]">
          <path d="M10 30Q8 25 2 18Q0 15 3 15L8 19L5 6Q6 3 8 6L12 15L12 3Q14 0 16 3L17 15L20 4Q22 2 23 5L21 17L26 9Q29 8 28 11L22 26V30Z" fill="#f7f7f7" stroke="#3a4050" strokeWidth="1.500" strokeLinejoin="round" />
        </Glyph>
      </button>
      <button aria-label="Zoom" className="mr-5">
        <Glyph box="0 0 32 32" className="size-8">
          <path d="M19 19L29 29" stroke="#2a3038" strokeWidth="4" />
          <circle cx="12" cy="12" r="10" fill="#e4f0f0" stroke="#667" strokeWidth="2" />
          <path d="M25 5H31M28 2V8M25 12H31" stroke="#333" strokeWidth="1.500" />
        </Glyph>
      </button>
      <button aria-label="Fit" className="mr-[14px] flex items-center gap-[10px]">
        <Glyph box="0 0 31 32" className="h-8 w-[31px]">
          <path d="M1 2H29V31H1Z" stroke="#777" strokeWidth="1.200" strokeDasharray="4 2" />
          <path d="M19 20L29 30" stroke="#2a3038" strokeWidth="4" />
          <circle cx="12" cy="13" r="10" fill="#e4f0f0" stroke="#667" strokeWidth="2" />
        </Glyph>
        {caret}
      </button>
      <button aria-label="Display settings" className="mr-[15px] flex items-center gap-[6px]">
        <Glyph box="0 0 30 32" className="h-8 w-[30px]">
          <path d="M1 2H29V24H1Z" fill="#eef0f3" stroke="#555" strokeWidth="1.500" />
          <path d="M4 5H26V21H4Z" fill="#8fb4e2" stroke="#3d649c" strokeWidth="1.500" />
          <path d="M12 25H18V28H22V31H8V28H12Z" fill="#99a" />
        </Glyph>
        {caret}
      </button>
      <button aria-label="Grid and snaps" className="mr-[14px] flex items-center gap-[6px]">
        <Glyph box="0 0 30 30" className="h-[30px] w-[30px]">
          <path d="M1 1H29V29H1Z" fill="#f7f7f7" stroke="#444" strokeWidth="1.500" />
          <path d="M5 1V29M9 1V29M13 1V29M17 1V29M21 1V29M25 1V29M1 5H29M1 9H29M1 13H29M1 17H29M1 21H29M1 25H29" stroke="#666" strokeWidth="1.200" />
        </Glyph>
        {caret}
      </button>
      <button aria-label="Viewports" className="flex items-center gap-[6px]">
        <Glyph box="0 0 30 26" className="h-[26px] w-[30px]">
          <path d="M1 1H29V25H1Z" fill="#a9c6ec" stroke="#3d649c" strokeWidth="2" />
          <path d="M15 1V25M1 13H29" stroke="#3d649c" strokeWidth="2" />
          <path d="M4 4H12V10H4ZM18 4H26V10H18ZM4 16H12V22H4ZM18 16H26V22H18Z" fill="#7fa9de" />
        </Glyph>
        {caret}
      </button>
    </div>
  );
}

/* ---------- Timeline ---------- */

function Timeline() {
  return (
    <footer className="flex h-[100px] items-center border-t-2 border-[#ccc] bg-[#f1f1f1] pl-[22px] pr-[26px]">
      <div className="flex items-center gap-[25px]">
        <button aria-label="Go to start">
          <Glyph box="0 0 25 28" className="h-7 w-[25px]">
            <path d="M0 0H3V28H0ZM24 0V28L5 14Z" fill="#4d4d4d" />
          </Glyph>
        </button>
        <button aria-label="Step back">
          <Glyph box="0 0 25 28" className="h-7 w-[25px]">
            <path d="M0 14L19 1V27ZM21 8H25V20H21Z" fill="#4d4d4d" />
          </Glyph>
        </button>
        <button aria-label="Play">
          <Glyph box="0 0 24 32" className="h-8 w-6">
            <path d="M0 0L24 16L0 32Z" fill="#4d4d4d" />
          </Glyph>
        </button>
        <button aria-label="Step forward">
          <Glyph box="0 0 25 28" className="h-7 w-[25px]">
            <path d="M25 14L6 1V27ZM0 8H4V20H0Z" fill="#4d4d4d" />
          </Glyph>
        </button>
        <button aria-label="Go to end">
          <Glyph box="0 0 25 28" className="h-7 w-[25px]">
            <path d="M22 0H25V28H22ZM1 0V28L20 14Z" fill="#4d4d4d" />
          </Glyph>
        </button>
      </div>
      <button aria-label="Extrude feature" className="ml-[44px]">
        <Glyph box="1094 1712 56 74" className="h-[74px] w-14">
          <path d="M1098 1724L1103 1714M1108 1724L1113 1714M1118 1724L1123 1714" stroke="#444" strokeWidth="4" />
          <path d="M1097 1740V1758Q1099 1764 1112 1764Q1125 1764 1127 1758V1740Z" fill="#69afe6" />
          <ellipse cx="1112" cy="1739" rx="15" ry="6" fill="#8acaff" stroke="#69afe6" />
          <path d="M1113.500 1770V1784" stroke="#ccc" strokeWidth="4" />
          <path d="M1124 1720H1148V1728L1138 1738V1784H1134V1738L1124 1728Z" fill="#666" />
        </Glyph>
      </button>
      <button aria-label="Timeline settings" className="ml-auto text-[#999]">
        <Gear className="size-8" />
      </button>
    </footer>
  );
}

export default function App() {
  return (
    <div className={`flex min-h-screen overflow-hidden bg-[#f1f1f1] ${UI}`}>
      <DataPanel />
      <main className="flex min-w-0 flex-1 flex-col">
        <TopBar />
        <Ribbon />
        <div className="relative flex-1 overflow-hidden bg-white">
          <Scene />
          <SideTabs />
          <div
            role="tooltip"
            className="absolute right-[90px] top-[164px] w-[834px] whitespace-nowrap border border-[#b5b5b5] border-t-[#888] bg-[#ececec] py-px text-center font-['Inter',sans-serif] text-[25px] leading-[34px] text-black shadow-[0_10px_36px_rgba(0,0,0,0.4)]"
          >
            Select linear or circular reference edges to fully define hole location
          </div>
          <HoleDialog />
          <NavBar />
          <p className="absolute bottom-[18px] right-[35px] text-[24px] font-semibold leading-7 text-[#333]">1 Face | Area : 1256.637 mm^2</p>
        </div>
        <Timeline />
      </main>
    </div>
  );
}
